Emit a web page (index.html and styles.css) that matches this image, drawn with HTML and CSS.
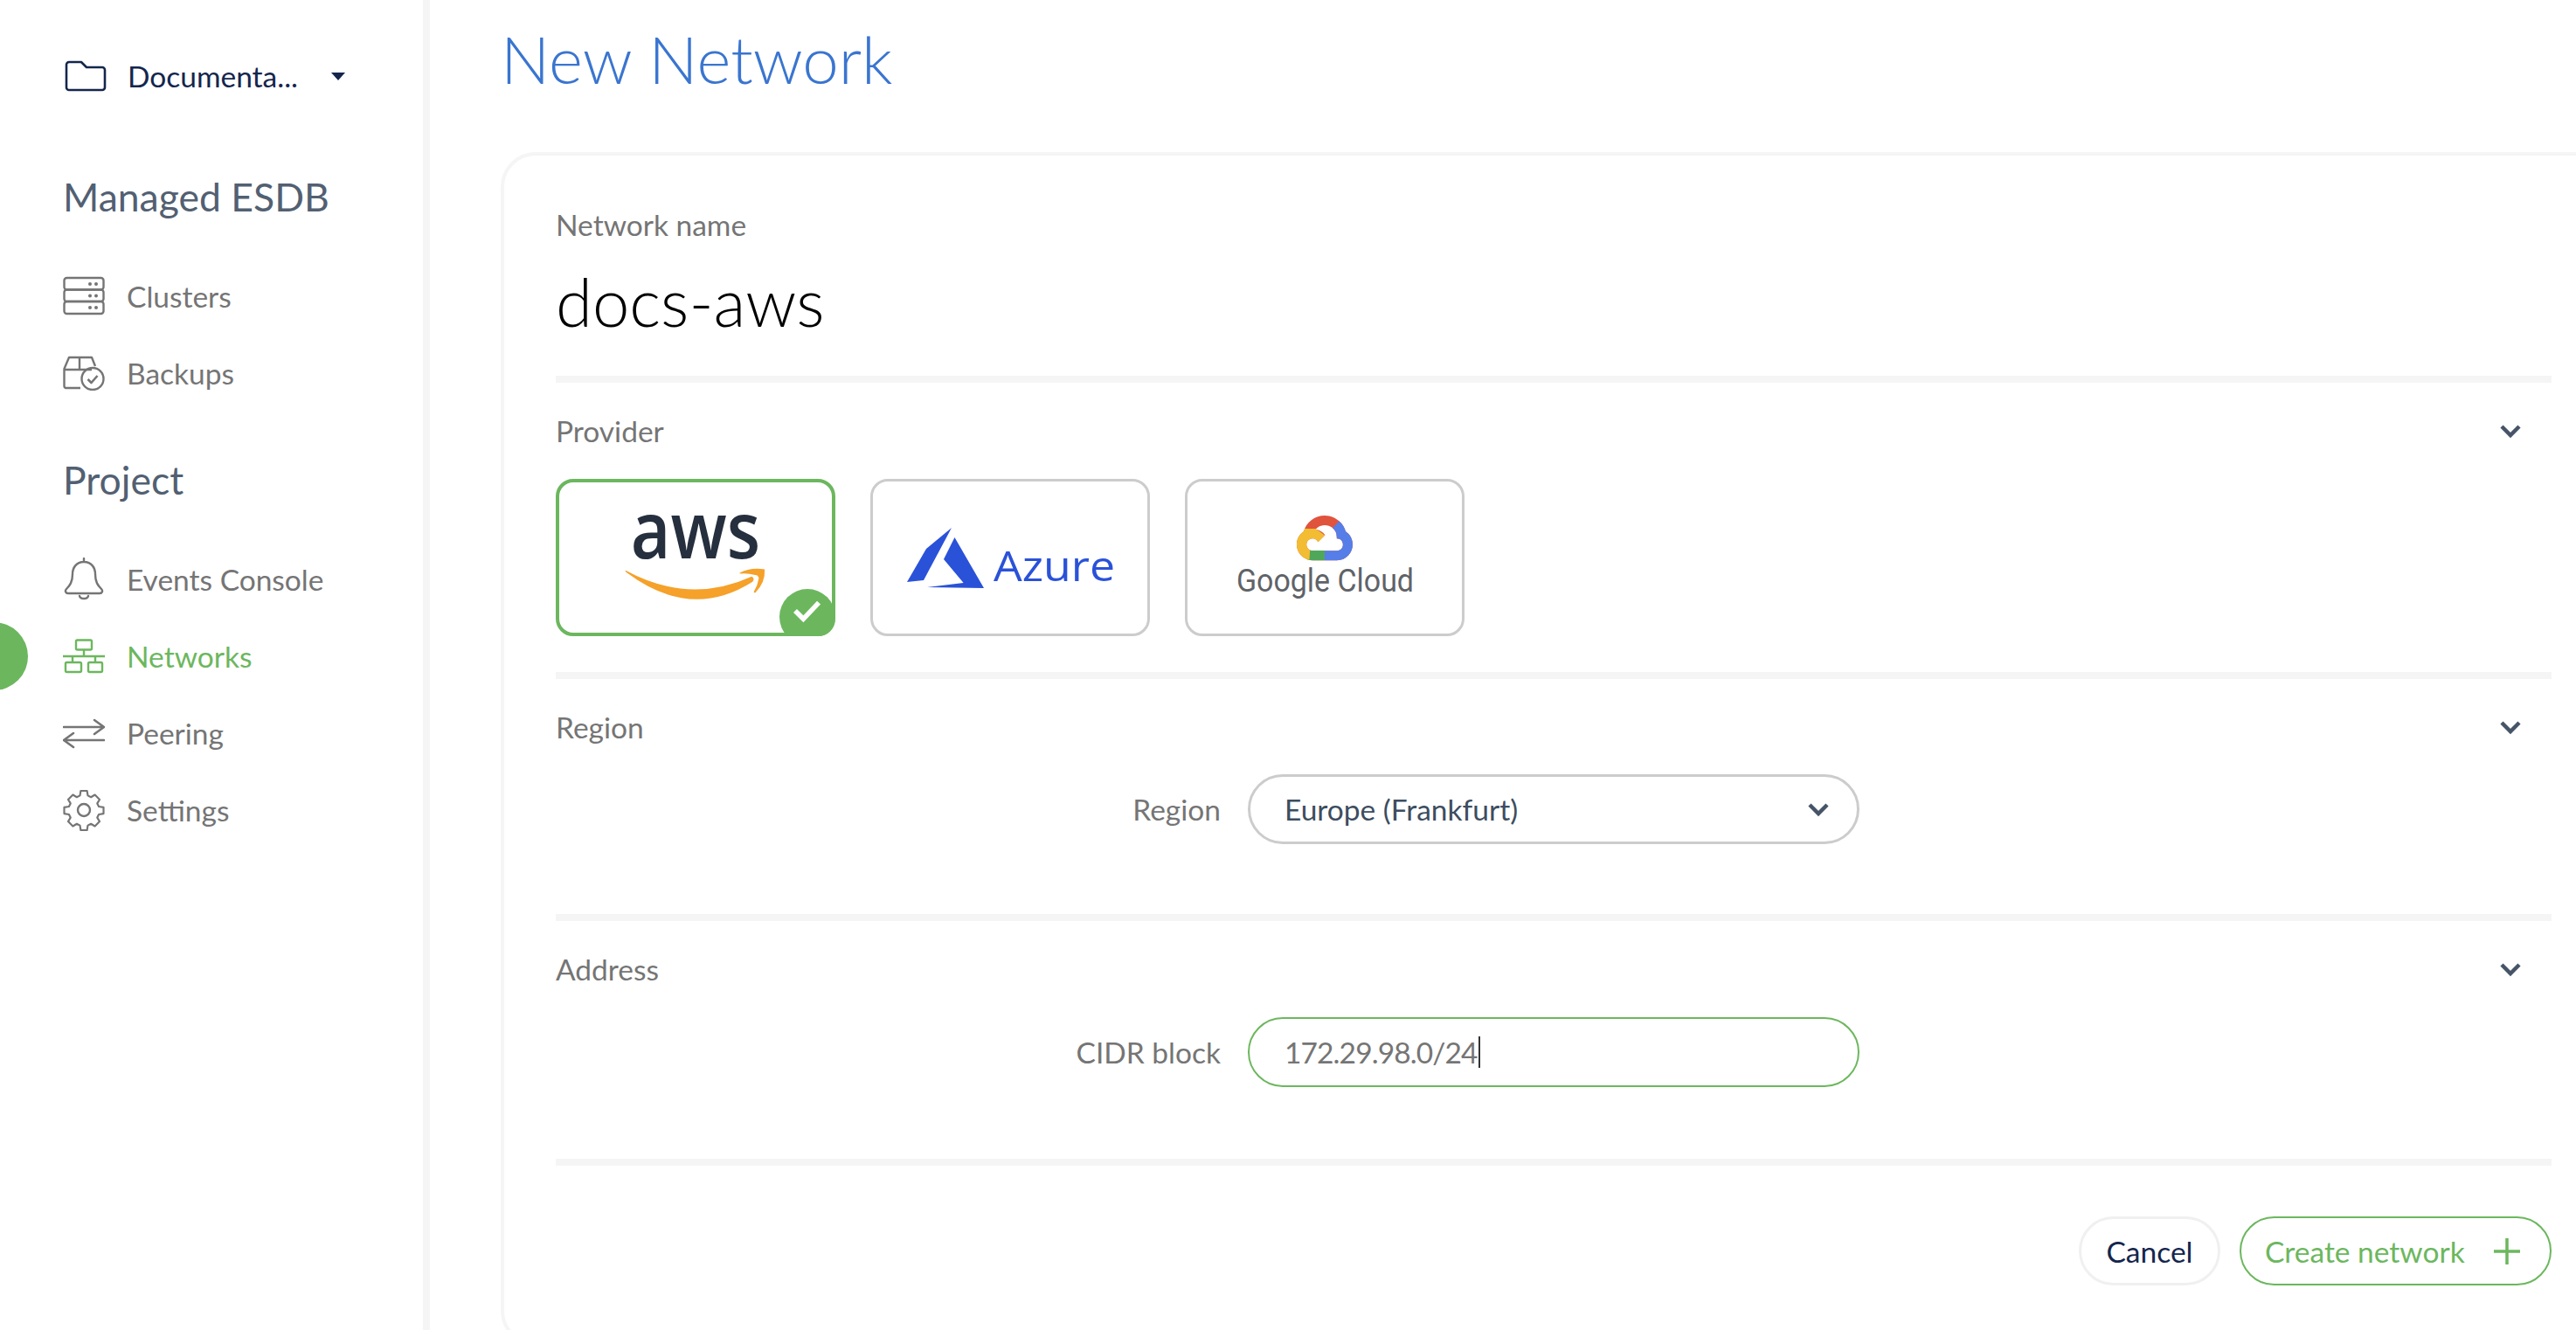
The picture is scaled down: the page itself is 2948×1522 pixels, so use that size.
FILE: index.html
```html
<!DOCTYPE html>
<html lang="en">
<head>
    <meta charset="UTF-8">
    <title>New Network</title>
    <link rel="stylesheet" href="styles.css">
</head>
<body>
<div class="app">
    <aside class="sidebar">
        <div class="project-select">
            <svg class="folder" width="48" height="36" viewBox="0 0 48 36"><path d="M2 5a3 3 0 0 1 3-3h14l6 6h18a3 3 0 0 1 3 3v20a3 3 0 0 1-3 3H5a3 3 0 0 1-3-3z" fill="none" stroke="#14264d" stroke-width="2.6" stroke-linejoin="round"/></svg>
            <span class="project-name">Documenta...</span>
            <span class="caret-down"></span>
        </div>

        <h2 class="nav-title first">Managed ESDB</h2>
        <a class="nav-item">
            <svg class="nav-icon" width="48" height="46" viewBox="0 0 48 46" fill="none" stroke="#757575" stroke-width="2.4"><rect x="1.5" y="2" width="45" height="13.500" rx="3"/><rect x="1.500" y="15.500" width="45" height="13.500" rx="3"/><rect x="1.500" y="29" width="45" height="14" rx="3"/><g fill="#757575" stroke="none"><circle cx="31" cy="9" r="2"/><circle cx="38" cy="9" r="2"/><circle cx="31" cy="22.500" r="2"/><circle cx="38" cy="22.500" r="2"/><circle cx="31" cy="36" r="2"/><circle cx="38" cy="36" r="2"/></g></svg>
            <span>Clusters</span>
        </a>
        <a class="nav-item">
            <svg class="nav-icon" width="48" height="40" viewBox="0 0 48 40" fill="none" stroke="#757575" stroke-width="2.400" stroke-linejoin="round"><path d="M20 37H3a2 2 0 0 1-1.500-2V15L7 2h26l4 10"/><path d="M1.500 16H33M19 2v14"/><circle cx="34" cy="26.500" r="12.500"/><path d="M28.500 27l4 4 7-8" stroke-width="2.600"/></svg>
            <span>Backups</span>
        </a>

        <h2 class="nav-title">Project</h2>
        <a class="nav-item">
            <svg class="nav-icon" width="48" height="50" viewBox="0 0 48 50" fill="none" stroke="#757575" stroke-width="2.400" stroke-linejoin="round" stroke-linecap="round"><path d="M24 1v4M24 5c-9 0-13 7-13 14 0 9-3 13-7 17-2 2-1 5 2 5h36c3 0 4-3 2-5-4-4-7-8-7-17 0-7-4-14-13-14z"/><path d="M19 44c1 4 9 4 10 0"/></svg>
            <span>Events Console</span>
        </a>
        <a class="nav-item active">
            <svg class="nav-icon" width="48" height="40" viewBox="0 0 48 40" fill="none" stroke="#6cb75e" stroke-width="2.400" stroke-linejoin="round"><rect x="15" y="1.500" width="18" height="11" rx="1.500"/><path d="M24 12.500v7M0 20h48M11 20v7M37 20v7"/><rect x="3" y="27" width="18" height="11" rx="1.500"/><rect x="29" y="27" width="16" height="11" rx="1.500"/></svg>
            <span>Networks</span>
        </a>
        <a class="nav-item">
            <svg class="nav-icon" width="48" height="36" viewBox="0 0 48 36" fill="none" stroke="#757575" stroke-width="2.600" stroke-linecap="round" stroke-linejoin="round"><path d="M1 11h46M36 3l11 8-11 8"/><path d="M47 26H1M12 18L1 26l11 8"/></svg>
            <span>Peering</span>
        </a>
        <a class="nav-item">
            <svg class="nav-icon" width="48" height="48" viewBox="0 0 48 48" fill="none" stroke="#757575" stroke-width="2.400" stroke-linejoin="round"><circle cx="24" cy="24" r="7"/><path d="M20 2h8l1 6 4 2 5-3 6 6-3 5 2 4 6 1v8l-6 1-2 4 3 5-6 6-5-3-4 2-1 6h-8l-1-6-4-2-5 3-6-6 3-5-2-4-6-1v-8l6-1 2-4-3-5 6-6 5 3 4-2z" transform="translate(2.400 .2) scale(.9)"/></svg>
            <span>Settings</span>
        </a>
    </aside>

    <main class="main">
        <h1 class="page-title">New Network</h1>
        <div class="card">
            <div class="card-body">
                <div class="name-block">
                    <label class="label">Network name</label>
                    <div class="name-value">docs-aws</div>
                </div>

                <section class="section provider">
                    <div class="section-head">
                        <span class="label">Provider</span>
                        <svg class="chevron" width="26" height="18" viewBox="0 0 26 18"><path d="M3 4l10 10L23 4" fill="none" stroke="#465468" stroke-width="4.500"/></svg>
                    </div>
                    <div class="providers">
                        <div class="provider-card selected">
                            <svg class="logo" viewBox="3 3 314 174">
                                <text class="aws-text" x="85" y="91" textLength="150" lengthAdjust="spacingAndGlyphs">aws</text>
                                <path d="M79 105Q153 145 225 112Q229 114 226 118Q155 163 81 108Q78 106 79 105z" fill="#f5a12a"/>
                                <path d="M210.700 108Q224 101 240 103.700Q241 119 229 131L227.300 130Q232 122 233.300 113.700Q232 110 229 110.300Q220 108 212.300 108.700z" fill="#f5a12a"/>
                            </svg>
                            <span class="check-badge">
                                <svg width="36" height="30" viewBox="0 0 36 30"><path d="M3 15l10 10L32 5" fill="none" stroke="#fff" stroke-width="6"/></svg>
                            </span>
                        </div>
                        <div class="provider-card">
                            <svg class="logo" viewBox="3 3 314 174">
                                <g fill="#2a52d8">
                                    <path d="M93 56L64 80 42 118l19-2z"/>
                                    <path d="M96.500 67L130 125l-65-1 41.600-5L84 92z"/>
                                </g>
                                <text class="azure-text" x="141" y="117" textLength="139" lengthAdjust="spacingAndGlyphs">Azure</text>
                            </svg>
                        </div>
                        <div class="provider-card">
                            <svg class="logo" viewBox="3 3 314 174">
                                <defs>
                                    <clipPath id="cloudclip"><path clip-rule="evenodd" d="M12.190 2.380a9.344 9.344 0 0 0-9.234 6.893c-3.875 2.551-3.922 8.110-.247 10.941a6.717 6.717 0 0 0 4.070 1.386h5.173l.03.03h5.192c6.687.053 9.376-8.605 3.835-12.350a9.365 9.365 0 0 0-2.821-4.552 9.344 9.344 0 0 0-6.038-2.348zm-.358 4.146c1.244-.04 2.518.368 3.486 1.150a5.186 5.186 0 0 1 1.862 4.078v.518c3.530-.07 3.530 5.262 0 5.193h-5.193v-.031H6.785a2.590 2.590 0 0 1-1.067-.23 2.597 2.597 0 1 1 3.437-3.437l3.013-3.012a6.747 6.747 0 0 0-4.058-2.405 5.186 5.186 0 0 1 3.722-1.824z"/></clipPath>
                                </defs>
                                <g transform="translate(128 35.600) scale(2.667)">
                                    <g clip-path="url(#cloudclip)">
                                        <rect x="-1" y="0" width="26" height="24" fill="#e0533d"/>
                                        <path d="M15.300 7.700L19 4h6v20H12v-7z" fill="#557ee8"/>
                                        <path d="M5.700 17.200H12V24H3z" fill="#4fa75a"/>
                                        <path d="M-1 8h9.200l4 3-3 3-3.500 3.400L5.200 24H-1z" fill="#f3bd33"/>
                                    </g>
                                </g>
                                <text class="google-text" x="59" y="129" textLength="203" lengthAdjust="spacingAndGlyphs">Google Cloud</text>
                            </svg>
                        </div>
                    </div>
                </section>

                <section class="section region">
                    <div class="section-head">
                        <span class="label">Region</span>
                        <svg class="chevron" width="26" height="18" viewBox="0 0 26 18"><path d="M3 4l10 10L23 4" fill="none" stroke="#465468" stroke-width="4.500"/></svg>
                    </div>
                    <div class="field-row">
                        <span class="label field-label">Region</span>
                        <div class="pill select">
                            <span>Europe (Frankfurt)</span>
                            <svg width="26" height="18" viewBox="0 0 26 18"><path d="M3 4l10 10L23 4" fill="none" stroke="#465468" stroke-width="4.500"/></svg>
                        </div>
                    </div>
                </section>

                <section class="section address">
                    <div class="section-head">
                        <span class="label">Address</span>
                        <svg class="chevron" width="26" height="18" viewBox="0 0 26 18"><path d="M3 4l10 10L23 4" fill="none" stroke="#465468" stroke-width="4.500"/></svg>
                    </div>
                    <div class="field-row address-row">
                        <span class="label field-label">CIDR block</span>
                        <div class="pill input"><span>172.29.98.0/24</span><i class="cursor"></i></div>
                    </div>
                </section>

                <div class="actions">
                    <button class="btn btn-cancel">Cancel</button>
                    <button class="btn btn-create">
                        <span>Create network</span>
                        <svg width="30" height="30" viewBox="0 0 30 30"><path d="M15 0v30M0 15h30" stroke="#6cb75e" stroke-width="3.500"/></svg>
                    </button>
                </div>
            </div>
        </div>
    </main>
</div>
</body>
</html>
```

FILE: styles.css
```css
* {
    box-sizing: border-box;
}
html, body {
    margin: 0;
    height: 100%;
    overflow: hidden;
}
body {
    font-family: Lato, "Open Sans", sans-serif;
    background: #fff;
    color: #757575;
}
.app {
    display: flex;
    height: 100vh;
}

/* sidebar */
.sidebar {
    flex: 0 0 492px;
    border-right: 8px solid #f5f5f5;
    padding: 60px 0 0 72px;
}
.project-select {
    display: flex;
    align-items: center;
    height: 54px;
    padding-left: 2px;
}
.project-name {
    margin-left: 24px;
    font-size: 33.5px;
    color: #14264d;
}
.caret-down {
    margin-left: 38px;
    width: 0;
    height: 0;
    border-left: 8px solid transparent;
    border-right: 8px solid transparent;
    border-top: 9px solid #14264d;
}
.nav-title {
    margin: 48px 0 40px 0;
    height: 60px;
    line-height: 60px;
    font-size: 44.5px;
    font-weight: 400;
    color: #526072;
}
.nav-title.first {
    margin-top: 81px;
}
.nav-item {
    position: relative;
    display: flex;
    align-items: center;
    height: 88px;
    font-size: 33.5px;
    color: #757575;
}
.nav-icon {
    flex: none;
}
.nav-item span {
    margin-left: 25px;
}
.nav-item.active {
    color: #6cb75e;
}
.nav-item.active::before {
    content: "";
    position: absolute;
    left: -118px;
    top: 5px;
    width: 78px;
    height: 78px;
    border-radius: 50%;
    background: #6cb75e;
}

/* main */
.main {
    flex: 1;
    min-width: 0;
    padding-left: 81px;
}
.page-title {
    margin: 0;
    height: 174px;
    padding-top: 22px;
    font-size: 74.5px;
    line-height: 90px;
    font-weight: 300;
    color: #3a75d0;
}
.card {
    width: 2500px;
    height: 1366px;
    border: 4px solid #f5f5f5;
    border-radius: 40px;
    padding-left: 59px;
}
.card-body {
    width: 2284px;
}
.label {
    font-size: 33.5px;
    line-height: 40px;
    color: #757575;
}
.name-block {
    height: 260px;
    padding-top: 59px;
    border-bottom: 8px solid #f5f5f5;
}
.name-block .label {
    display: block;
}
.name-value {
    margin-top: 23px;
    font-size: 76px;
    line-height: 90px;
    font-weight: 300;
    color: #000;
}
.section {
    border-bottom: 8px solid #f5f5f5;
}
.section-head {
    display: flex;
    align-items: center;
    justify-content: space-between;
    height: 96px;
    padding: 14px 34px 0 0;
}
.provider {
    height: 339px;
}
.providers {
    display: flex;
    gap: 40px;
    margin-top: 14px;
}
.provider-card {
    position: relative;
    width: 320px;
    height: 180px;
    border: 3px solid #ccc;
    border-radius: 20px;
}
.provider-card.selected {
    border: 4px solid #6cb75e;
}
.logo {
    display: block;
    width: 100%;
    height: 100%;
    overflow: visible;
}
.aws-text {
    font-family: "Open Sans", sans-serif;
    font-size: 92px;
    font-weight: 600;
    fill: #252f3e;
}
.azure-text {
    font-family: "Open Sans", sans-serif;
    font-size: 48px;
    fill: #2a52d8;
}
.google-text {
    font-family: Roboto, sans-serif;
    font-size: 36px;
    fill: #5f6368;
}
.check-badge {
    position: absolute;
    right: -4px;
    bottom: -14px;
    width: 64px;
    height: 64px;
    padding-bottom: 14px;
    border-radius: 50%;
    background: #6cb75e;
    clip-path: inset(0 0 10px 0 round 0 0 20px 0);
    display: flex;
    align-items: center;
    justify-content: center;
}
.check-badge svg {
    width: 34px;
    height: 28px;
}
.region {
    height: 277px;
}
.address {
    height: 280px;
}
.field-row {
    display: flex;
    align-items: center;
    margin-top: 13px;
}
.address-row {
    margin-top: 14px;
}
.field-label {
    width: 761px;
    text-align: right;
}
.pill {
    display: flex;
    align-items: center;
    width: 700px;
    height: 80px;
    margin-left: 31px;
    padding: 0 31px 0 39px;
    border: 3px solid #ccc;
    border-radius: 40px;
    font-size: 33.5px;
}
.select {
    justify-content: space-between;
    color: #3d4d60;
}
.input {
    border: 2px solid #6cb75e;
    padding-left: 40px;
    color: #757575;
    letter-spacing: -0.9px;
}
.cursor {
    width: 2px;
    height: 36px;
    background: #333;
    margin-left: 1px;
}
.actions {
    display: flex;
    justify-content: flex-end;
    gap: 22px;
    margin-top: 58px;
}
.btn {
    height: 79px;
    border-radius: 40px;
    background: #fff;
    font-family: inherit;
    font-size: 33.5px;
}
.btn-cancel {
    width: 162px;
    border: 3px solid #f0f0f0;
    color: #14264d;
}
.btn-create {
    display: flex;
    align-items: center;
    justify-content: space-between;
    width: 357px;
    padding: 0 34px 0 27px;
    border: 2px solid #6cb75e;
    color: #6cb75e;
}
```
